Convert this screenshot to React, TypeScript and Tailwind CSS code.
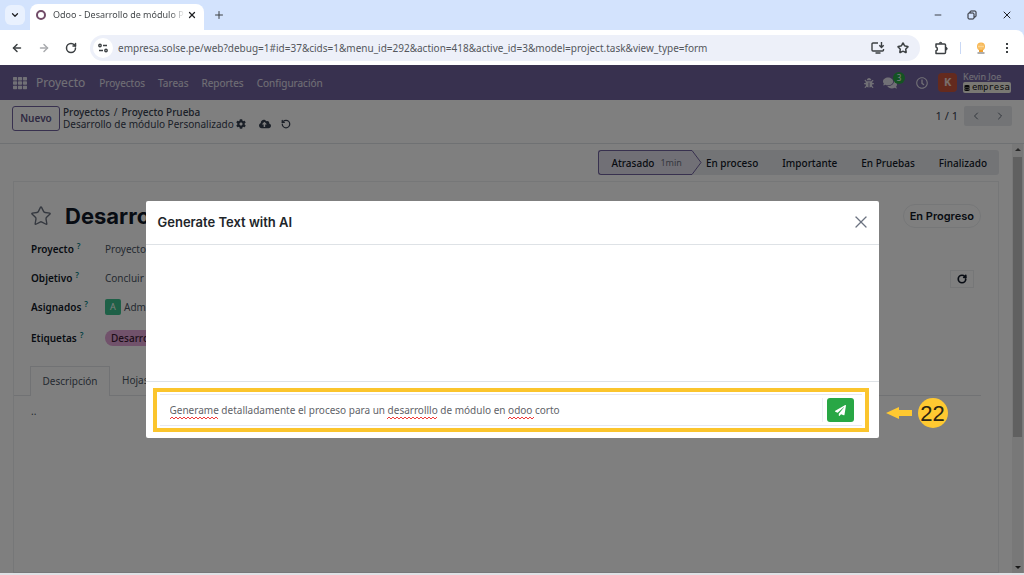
import React from 'react';
import {
    FaBug,
    FaCloudUploadAlt,
    FaCog,
    FaComments,
    FaDatabase,
    FaPaperPlane,
    FaRegClock,
    FaTh,
} from 'react-icons/fa';
import {
    ArrowLeft,
    ArrowRight,
    ChevronDown,
    ChevronLeft,
    ChevronRight,
    Minus,
    Plus,
    RotateCcw,
    RotateCw,
    Star,
    X,
} from 'lucide-react';

const menus = ['Proyectos', 'Tareas', 'Reportes', 'Configuración'];

const stages = ['En proceso', 'Importante', 'En Pruebas', 'Finalizado'];

const prompt = 'Generame detalladamente el proceso para un desarrolllo de módulo en odoo corto';

// start and width of every word the spell checker underlines
const misspelled = [
    { x: 0, width: 48 },
    { x: 217, width: 50 },
    { x: 338, width: 26 },
];

const wave = (x: number, width: number) => {
    let d = `M${x} 3`;
    for (let i = 2; i <= width; i += 2) {
        d += ` L${x + i} ${i % 4 === 0 ? 3 : 1}`;
    }
    return d;
};

const RestoreIcon: React.FC = () => (
    <svg viewBox="0 0 10 10" className="size-2.5" fill="none" stroke="#202124" aria-hidden="true">
        <rect x="1" y="3" width="6" height="6" rx="1" />
        <path d="M3 3V2a1 1 0 0 1 1-1h4a1 1 0 0 1 1 1v4a1 1 0 0 1-1 1H7" />
    </svg>
);

const SiteSettingsIcon: React.FC = () => (
    <svg viewBox="0 0 12 12" className="size-3" fill="none" stroke="#3c4043" strokeWidth="1.4" aria-hidden="true">
        <circle cx="3" cy="3.5" r="1.2" />
        <path d="M6 3.5h4M2 8.5h4" />
        <circle cx="9" cy="8.5" r="1.2" />
    </svg>
);

const InstallIcon: React.FC = () => (
    <svg viewBox="0 0 14 12" className="h-3 w-3.5" fill="none" stroke="#3c4043" strokeWidth="1.4" aria-hidden="true">
        <path d="M7 1H2a1 1 0 0 0-1 1v6a1 1 0 0 0 1 1h9.500a1 1 0 0 0 1-1V7" />
        <path d="M4.500 11h5M10.500 0v5M8.300 3.200l2.200 2.200 2.200-2.200" />
    </svg>
);

const ExtensionIcon: React.FC = () => (
    <svg viewBox="0 0 14 14" className="size-3.5" fill="none" stroke="#3c4043" strokeWidth="1.5" strokeLinejoin="round" aria-hidden="true">
        <path d="M2 3h8.500a1 1 0 0 1 1 1v7.500a1 1 0 0 1-1 1H2V9.800a2 2 0 0 0 0-3.800z" />
        <path d="M5.300 2.600a1.300 1.300 0 0 1 2.600 0M11.900 6.400a1.300 1.300 0 0 1 0 2.600" fill="#3c4043" strokeWidth="1" />
    </svg>
);

const ProfileIcon: React.FC = () => (
    <svg viewBox="0 0 10 12" className="h-3 w-2.5" aria-hidden="true">
        <circle cx="5" cy="4.500" r="4" fill="#f7b550" />
        <path d="M3 2.500v4M5 1.500v6M7 2.500v4M2 4.500h6" stroke="#fde3b0" strokeWidth="0.6" />
        <path d="M3 8h4v2H3z" fill="#f0a030" />
        <path d="M1.500 11h7" stroke="#777" strokeWidth="1.2" />
    </svg>
);

const BrowserBar: React.FC = () => (
    <header className="flex-shrink-0 bg-[#d3e3fd]">
        <div className="flex h-[30px] items-end">
            <button className="ml-[5px] flex size-5 items-center justify-center self-center rounded-md bg-[#e9f1fe]" aria-label="Buscar pestañas">
                <ChevronDown className="size-2.5 text-[#202124]" strokeWidth={3} />
            </button>
            <div className="ml-[5px] flex h-[26px] w-[174px] items-center rounded-t-lg bg-white px-[6px] pb-1">
                <span className="size-[10px] flex-shrink-0 rounded-full border-2 border-[#714b67]" />
                <span className="ml-[7px] w-[132px] flex-shrink-0 bg-linear-to-r from-[#3c4043] from-88% to-white bg-clip-text text-[9px] leading-4 whitespace-nowrap text-transparent">
                    Odoo - Desarrollo de módulo P
                </span>
                <button className="ml-[2px]" aria-label="Cerrar pestaña">
                    <X className="size-[10px] text-[#202124]" strokeWidth={3} />
                </button>
            </div>
            <button className="ml-[9px] self-center" aria-label="Nueva pestaña">
                <Plus className="size-3 text-[#3c4043]" strokeWidth={2} />
            </button>
            <div className="mr-[11px] ml-auto flex items-center gap-6 self-center">
                <button aria-label="Minimizar">
                    <Minus className="size-[10px] text-[#202124]" />
                </button>
                <button aria-label="Restaurar">
                    <RestoreIcon />
                </button>
                <button aria-label="Cerrar">
                    <X className="size-3 text-[#202124]" />
                </button>
            </div>
        </div>
        <div className="flex h-[35px] items-center rounded-tr-lg bg-white pr-[14px] pl-[11px]">
            <button aria-label="Atrás">
                <ArrowLeft className="size-3 text-[#3c4043]" strokeWidth={3} />
            </button>
            <button className="ml-[15px]" aria-label="Adelante">
                <ArrowRight className="size-3 text-[#a9abae]" strokeWidth={3} />
            </button>
            <button className="ml-[15px]" aria-label="Recargar">
                <RotateCw className="size-3 text-[#3c4043]" strokeWidth={3} />
            </button>
            <div className="ml-[13px] flex h-[26px] flex-1 items-center rounded-full bg-[#edf0f9] pr-[11px] pl-[3px]">
                <span className="flex size-5 items-center justify-center rounded-full bg-white">
                    <SiteSettingsIcon />
                </span>
                <input
                    className="ml-[5px] min-w-0 flex-1 bg-transparent text-[10px] leading-4 text-[#54575c] outline-none"
                    aria-label="Dirección"
                    readOnly
                    value="empresa.solse.pe/web?debug=1#id=37&cids=1&menu_id=292&action=418&active_id=3&model=project.task&view_type=form"
                />
                <button aria-label="Instalar">
                    <InstallIcon />
                </button>
                <button className="ml-3" aria-label="Agregar a favoritos">
                    <Star className="size-3 text-[#3c4043]" strokeWidth={3} />
                </button>
            </div>
            <button className="ml-[14px]" aria-label="Extensiones">
                <ExtensionIcon />
            </button>
            <span className="ml-3 h-3 w-px bg-[#c9d8f5]" />
            <button className="ml-[15px]" aria-label="Perfil">
                <ProfileIcon />
            </button>
            <button className="ml-[18px] flex flex-col gap-[2px] px-[2px]" aria-label="Menú">
                <span className="size-[2px] bg-[#3c4043]" />
                <span className="size-[2px] bg-[#3c4043]" />
                <span className="size-[2px] bg-[#3c4043]" />
            </button>
        </div>
    </header>
);

const NavBar: React.FC = () => (
    <nav className="flex h-[35px] flex-shrink-0 items-center bg-[#71639e] pr-[13px] pl-[13px] text-white/80">
        <FaTh className="size-[14px]" />
        <a href="#proyecto" className="ml-[9px] text-[12px] leading-5">Proyecto</a>
        <div className="ml-[14px] flex gap-[13px] text-[10px] leading-4">
            {menus.map((menu) => (
                <a key={menu} href={`#${menu}`}>{menu}</a>
            ))}
        </div>
        <div className="ml-auto flex items-center">
            <FaBug className="size-[10px]" />
            <button className="relative ml-[9px]" aria-label="Conversaciones">
                <FaComments className="size-[14px]" />
                <span className="absolute -top-1 left-[10px] flex size-3 items-center justify-center rounded-full bg-[#28a745] text-[8px] text-white">3</span>
            </button>
            <button className="ml-[19px]" aria-label="Actividades">
                <FaRegClock className="size-3" />
            </button>
            <span className="ml-[10px] flex size-[19px] items-center justify-center rounded-sm bg-[#c8553d] text-[11px] font-bold">K</span>
            <div className="ml-[6px]">
                <p className="text-[9px] leading-[10px]">Kevin Joe</p>
                <p className="flex items-center gap-[2px] rounded-xs bg-[#f2f0e6] px-px font-['DejaVu_Sans_Mono'] text-[9px] leading-[11px] text-[#111]">
                    <FaDatabase className="size-[6px]" />
                    empresa
                </p>
            </div>
        </div>
    </nav>
);

const ControlPanel: React.FC = () => (
    <div className="flex h-[44px] flex-shrink-0 items-start border-b border-[#dee2e6] pt-[6px] pr-3 pl-3">
        <button className="h-[25px] w-12 rounded-[3px] border border-[#71639e] text-[10px] font-semibold text-[#5d5284]">Nuevo</button>
        <div className="ml-[3px] text-[10px] leading-3 text-[#374151]">
            <p className="font-medium">
                <a href="#proyectos">Proyectos</a>
                <span className="mx-1 font-normal">/</span>
                <a href="#prueba">Proyecto Prueba</a>
            </p>
            <div className="flex items-center">
                <span>Desarrollo de módulo Personalizado</span>
                <FaCog className="ml-[2px] size-[10px]" />
                <FaCloudUploadAlt className="ml-[13px] size-3" />
                <RotateCcw className="ml-[10px] size-[10px]" strokeWidth={3} />
            </div>
        </div>
        <div className="ml-auto flex items-center text-[#374151]">
            <span className="text-[11px]">1 / 1</span>
            <div className="ml-[6px] flex h-5 items-center gap-3 rounded-xs bg-[#e7e9ed] px-[6px]">
                <button aria-label="Anterior">
                    <ChevronLeft className="size-3" strokeWidth={1.5} />
                </button>
                <button aria-label="Siguiente">
                    <ChevronRight className="size-3" strokeWidth={1.5} />
                </button>
            </div>
        </div>
    </div>
);

const StatusBar: React.FC = () => (
    <div className="flex h-[25px] justify-end text-[10px] leading-4 font-medium text-[#111827]">
        <div className="flex items-center rounded-l-[3px] border border-r-0 border-[#71639e] bg-[#e3e0ec] pl-3">
            Atrasado
            <span className="ml-[6px] text-[9px] font-normal text-[#6b7280]">1min</span>
        </div>
        <div className="flex items-center rounded-r-[3px] bg-[#e7e9ed] pr-3">
            <svg viewBox="0 0 20 25" className="h-[25px] w-5" aria-hidden="true">
                <path d="M0 .5h10l9 12-9 12H0z" fill="#e3e0ec" />
                <path d="M0 .5h10l9 12-9 12H0" fill="none" stroke="#71639e" />
            </svg>
            <div className="flex gap-6 pl-1">
                {stages.map((stage) => (
                    <button key={stage}>{stage}</button>
                ))}
            </div>
        </div>
    </div>
);

const Field: React.FC<{ label: string; children: React.ReactNode }> = ({ label, children }) => (
    <div className="flex h-[29px] items-center text-[10px] leading-4">
        <span className="w-[74px] flex-shrink-0 font-semibold text-[#111827]">
            {label}
            <sup className="ml-[3px] text-[8px] text-[#017e84]">?</sup>
        </span>
        {children}
    </div>
);

const Sheet: React.FC = () => (
    <section className="mt-[6px] flex-1 border border-[#eceef0] pr-[17px] text-[#4b5563]">
        <div className="flex items-center pt-5 pl-4">
            <Star className="size-[22px] text-[#6b7280]" strokeWidth={1.5} />
            <h1 className="ml-[13px] flex-1 font-['Inter'] text-[22px] leading-7 font-bold text-[#111827]">Desarrollo</h1>
            <button className="h-6 rounded-full border border-[#eceef0] px-[6px] font-['Inter'] text-[11px] font-semibold text-[#111827]">En Progreso</button>
        </div>
        <div className="relative pt-1 pl-[17px]">
            <Field label="Proyecto">Proyecto Prueba</Field>
            <Field label="Objetivo">Concluir</Field>
            <Field label="Asignados">
                <span className="mr-[3px] flex size-4 items-center justify-center rounded-xs bg-[#3cc18e] text-[9px] text-white">A</span>
                Administrador
            </Field>
            <div className="pt-[2px]">
                <Field label="Etiquetas">
                    <span className="rounded-full bg-[#e2a4d6] px-[6px] font-medium text-[#3b1a33]">Desarrollo</span>
                </Field>
            </div>
            <button className="absolute top-10 right-[7px] flex h-[18px] w-6 items-center justify-center border border-[#eceef0]" aria-label="Actualizar">
                <RotateCw className="size-[10px] text-[#111827]" strokeWidth={4} />
            </button>
        </div>
        <div className="mt-[14px] flex h-[30px] text-[10px]">
            <span className="w-4 border-b border-[#e3e5e9]" />
            <button className="w-20 border border-b-0 border-[#e3e5e9]">Descripción</button>
            <div className="flex-1 border-b border-[#e3e5e9]">
                <button className="h-full px-3">Hojas de horas</button>
            </div>
        </div>
        <p className="pt-2 pl-[17px] text-[10px]">..</p>
    </section>
);

const ScrollBar: React.FC = () => (
    <div className="mr-px flex w-[11px] flex-shrink-0 flex-col items-center bg-[#f1f1f1] py-1">
        <span className="border-x-[3px] border-b-[3px] border-x-transparent border-b-[#505050]" />
        <span className="mt-[6px] h-[280px] w-[9px] bg-[#c1c1c1]" />
        <span className="mt-auto border-x-[3px] border-t-[3px] border-x-transparent border-t-[#303030]" />
    </div>
);

const StepMarker: React.FC = () => (
    <div className="absolute top-[6px] left-full ml-[21px] flex items-center gap-[6px]">
        <svg viewBox="0 0 26 12" className="h-3 w-[26px]" fill="#ffc931" aria-hidden="true">
            <path d="M0 6 13 0v3h13v6H13v3z" />
        </svg>
        <span className="flex size-[30px] items-center justify-center rounded-full bg-[#ffc931] font-['Liberation_Sans'] text-[22px] text-[#2b2411]">22</span>
    </div>
);

const GenerateDialog: React.FC = () => (
    <div role="dialog" aria-labelledby="dialog-title" className="w-full max-w-[733px] rounded-xs bg-white">
        <div className="flex h-[44px] items-center justify-between border-b border-[#dee2e6] px-3 pb-[2px]">
            <h2 id="dialog-title" className="font-['Inter'] text-[13px] leading-4 font-semibold text-[#212529]">Generate Text with AI</h2>
            <button className="-mr-1" aria-label="Cerrar">
                <X className="size-5 text-[#6b7280]" strokeWidth={1.5} />
            </button>
        </div>
        <div className="h-[136px]" />
        <div className="border-t border-[#dee2e6] pt-[6px] pr-[10px] pb-[6px] pl-[7px]">
            <div className="relative border-4 border-[#fbc52d] px-[3px] py-[2px]">
                <div className="flex h-[32px] items-center border-y border-[#e7e9f2] pr-2 pl-[10px]">
                    <div className="relative flex-1 border-r border-[#eef0f6]">
                        <input
                            className="block h-6 w-full bg-transparent text-[10px] leading-4 text-[#5f6368] outline-none"
                            aria-label="Mensaje"
                            spellCheck={false}
                            defaultValue={prompt}
                        />
                        <svg viewBox="0 0 385 4" className="pointer-events-none absolute top-[18px] left-0 h-1 w-[385px]" fill="none" stroke="#f03a3a" aria-hidden="true">
                            {misspelled.map((word) => (
                                <path key={word.x} d={wave(word.x, word.width)} />
                            ))}
                        </svg>
                    </div>
                    <button className="ml-1 flex h-6 w-[27px] items-center justify-center rounded-[3px] bg-[#28a745]" aria-label="Enviar">
                        <FaPaperPlane className="size-[11px] text-white" />
                    </button>
                </div>
                <StepMarker />
            </div>
        </div>
    </div>
);

const App: React.FC = () => {
    return (
        <div className="flex h-screen flex-col overflow-hidden bg-white font-['Noto_Sans',sans-serif]">
            <BrowserBar />
            <div className="relative flex min-h-0 flex-1 flex-col">
                <NavBar />
                <ControlPanel />
                <main className="flex min-h-0 flex-1">
                    <div className="flex min-w-0 flex-1 flex-col pt-[6px] pr-[13px] pl-[13px]">
                        <StatusBar />
                        <Sheet />
                    </div>
                    <ScrollBar />
                </main>
                <div className="absolute inset-0 flex items-start justify-center bg-black/50 pt-[136px]">
                    <GenerateDialog />
                </div>
            </div>
            <footer className="h-[2px] flex-shrink-0 bg-[#dfe1e5]" />
        </div>
    );
};

export default App;
